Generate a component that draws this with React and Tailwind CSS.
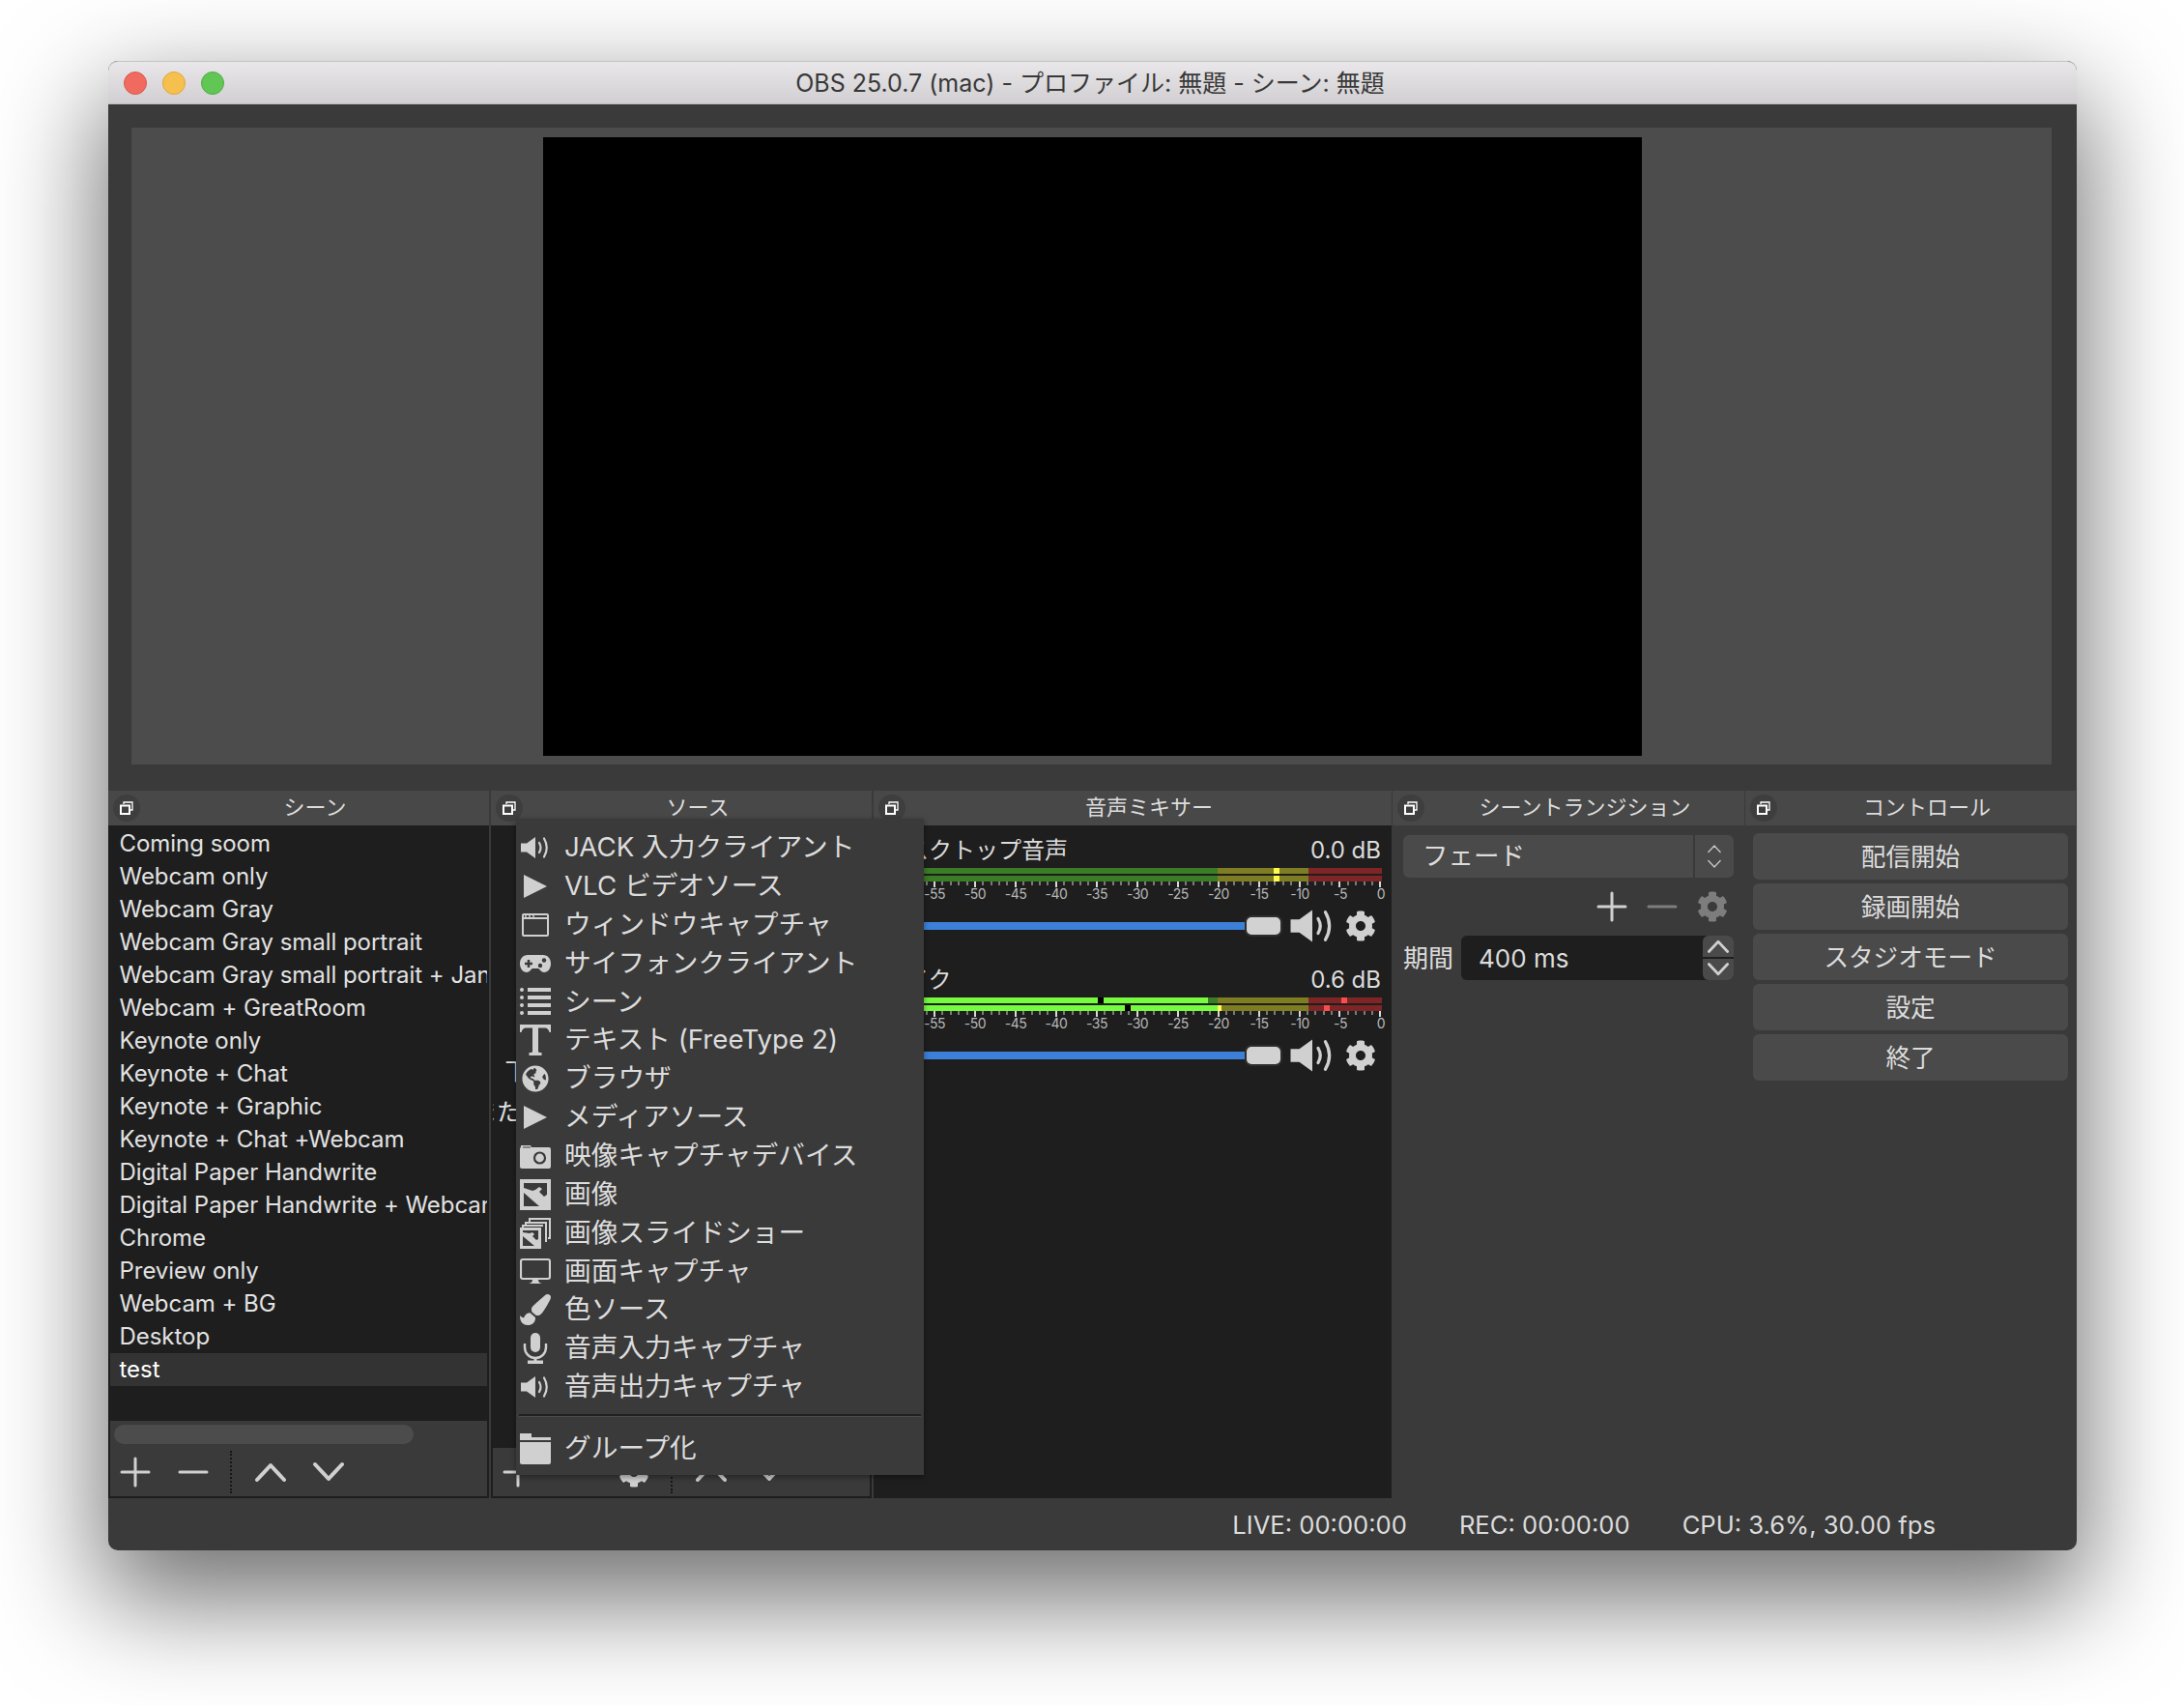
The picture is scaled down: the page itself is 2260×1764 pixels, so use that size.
import React from 'react';
import { FaCog, FaGlobeAmericas, FaPaintBrush } from 'react-icons/fa';

const scenes = [
    'Coming soom', 'Webcam only', 'Webcam Gray', 'Webcam Gray small portrait',
    'Webcam Gray small portrait + Jan', 'Webcam + GreatRoom', 'Keynote only', 'Keynote + Chat',
    'Keynote + Graphic', 'Keynote + Chat +Webcam', 'Digital Paper Handwrite',
    'Digital Paper Handwrite + Webcam', 'Chrome', 'Preview only', 'Webcam + BG', 'Desktop', 'test',
];

const buttons = ['配信開始', '録画開始', 'スタジオモード', '設定', '終了'];

const DARK = '#3a3a3a';

// menu icons, all on a 32 box
const Speaker = ({ className = 'w-[32px] h-[32px]' }) => (
    <svg viewBox="0 0 32 32" className={className}>
        <path d="M1 11.5h6L16 5v22l-9-6.500H1z" fill="currentColor" />
        <path d="M20 11q3 5 0 10M25 6.500q5.500 9.500 0 19" fill="none" stroke="currentColor" strokeWidth="2.200" strokeLinecap="round" />
    </svg>
);

const Play = () => (
    <svg viewBox="0 0 32 32" className="w-[32px] h-[32px]"><path d="M4 4l24 12-24 12z" fill="currentColor" /></svg>
);

const WindowIcon = () => (
    <svg viewBox="0 0 32 32" className="w-[32px] h-[32px]">
        <rect x="3" y="5" width="26" height="22" rx="1" fill="none" stroke="currentColor" strokeWidth="2" />
        <path d="M3 9h26" stroke="currentColor" strokeWidth="2" />
        <path d="M5 7h2M9 7h2M13 7h2" stroke="currentColor" strokeWidth="1.500" />
    </svg>
);

const Gamepad = () => (
    <svg viewBox="0 0 32 32" className="w-[32px] h-[32px]">
        <path d="M8 7h16c5 0 8 4 8 9s-3 9-7 9c-3 0-4-3-6-4h-6c-2 1-3 4-6 4-4 0-7-4-7-9s3-9 8-9z" fill="currentColor" />
        <path d="M5 16h8M9 12v8" stroke={DARK} strokeWidth="2.500" />
        <circle cx="25" cy="12.500" r="2.200" fill={DARK} />
        <circle cx="21" cy="18" r="2.200" fill={DARK} />
    </svg>
);

const ListIcon = () => (
    <svg viewBox="0 0 32 32" className="w-[32px] h-[32px]">
        {[4, 12, 20, 28].map((y) => (
            <g key={y} fill="currentColor">
                <circle cx="2" cy={y} r="2" />
                <rect x="8" y={y - 2} width="24" height="4" />
            </g>
        ))}
    </svg>
);

const TypeIcon = () => (
    <svg viewBox="0 0 32 32" className="w-[32px] h-[32px]">
        <path d="M0 0h32v8h-1.500q-1-4-4-4.500H19V28q0 1 3.500 1v3h-13v-3q3.500 0 3.500-1V3.500H5.500q-3 .5-4 4.500H0z" fill="currentColor" />
    </svg>
);

const Camera = () => (
    <svg viewBox="0 0 32 32" className="w-[32px] h-[32px]">
        <path d="M1 7V5h10l1 2h18q2 0 2 2v18q0 2-2 2H2q-2 0-2-2V9q0-2 1-2z" fill="currentColor" />
        <path d="M3 7h8" stroke={DARK} strokeWidth="1" />
        <circle cx="20.500" cy="18" r="5.500" fill="none" stroke={DARK} strokeWidth="2.200" />
    </svg>
);

const ImageIcon = () => (
    <svg viewBox="0 0 32 32" className="w-[32px] h-[32px]">
        <rect width="32" height="32" fill="currentColor" />
        <path d="M4 4h24v12l-3 2-5-5 3-3-3-2-4 3-3 1-9-3z" fill={DARK} />
        <path d="M4 14v14h16z" fill={DARK} />
    </svg>
);

const Slides = () => (
    <svg viewBox="0 0 32 32" className="w-[32px] h-[32px]">
        <path d="M10 4V1h21v20h-2M6 8V5h21v20M3 11V8h21" fill="none" stroke="currentColor" strokeWidth="2" />
        <rect x="0" y="10" width="22" height="22" fill="currentColor" />
        <path d="M3 13h16v9l-2 1-4-4 2-2-2-2-3 1-7-1z" fill={DARK} />
        <path d="M3 19v10h12z" fill={DARK} />
    </svg>
);

const Monitor = () => (
    <svg viewBox="0 0 32 32" className="w-[32px] h-[32px]">
        <rect x="1" y="4" width="30" height="20" rx="2" fill="none" stroke="currentColor" strokeWidth="2.200" />
        <path d="M9 29q4-.5 4-4h6q0 3.500 4 4z" fill="currentColor" />
    </svg>
);

const Mic = () => (
    <svg viewBox="0 0 32 32" className="w-[32px] h-[32px]">
        <rect x="11" y="0" width="10" height="20" rx="5" fill="currentColor" />
        <path d="M5 11v4a11 11 0 0 0 22 0v-4" fill="none" stroke="currentColor" strokeWidth="2.400" />
        <path d="M14.500 25h3v3.500H24V32H8v-3.500h6.500z" fill="currentColor" />
    </svg>
);

const Folder = () => (
    <svg viewBox="0 0 32 32" className="w-[32px] h-[32px]">
        <path d="M0 0h12v4h20v3H0z" fill="currentColor" />
        <path d="M0 9h32v21q0 2-2 2H2q-2 0-2-2z" fill="currentColor" />
    </svg>
);

const menuItems = [
    [<Speaker />, 'JACK 入力クライアント'],
    [<Play />, 'VLC ビデオソース'],
    [<WindowIcon />, 'ウィンドウキャプチャ'],
    [<Gamepad />, 'サイフォンクライアント'],
    [<ListIcon />, 'シーン'],
    [<TypeIcon />, 'テキスト (FreeType 2)'],
    [<FaGlobeAmericas size={28} />, 'ブラウザ'],
    [<Play />, 'メディアソース'],
    [<Camera />, '映像キャプチャデバイス'],
    [<ImageIcon />, '画像'],
    [<Slides />, '画像スライドショー'],
    [<Monitor />, '画面キャプチャ'],
    [<FaPaintBrush size={32} />, '色ソース'],
    [<Mic />, '音声入力キャプチャ'],
    [<Speaker />, '音声出力キャプチャ'],
];

const MenuRow = ({ icon, label }) => (
    <div className="h-[39.86px] flex items-center pl-[4px] text-[27.7px] text-[#dcdcdc] whitespace-nowrap">
        <span className="w-[32px] h-[32px] flex items-center justify-center text-[#d0d0d0] shrink-0">{icon}</span>
        <span className="ml-[14px]">{label}</span>
    </div>
);

const Plus = ({ className = 'text-[#d0d0d0]' }) => (
    <svg viewBox="0 0 32 32" className={`w-[32px] h-[32px] ${className}`}>
        <path d="M2 16h28M16 2v28" stroke="currentColor" strokeWidth="3" strokeLinecap="round" />
    </svg>
);

const Minus = ({ className = 'text-[#d0d0d0]' }) => (
    <svg viewBox="0 0 32 32" className={`w-[32px] h-[32px] ${className}`}>
        <path d="M2 16h28" stroke="currentColor" strokeWidth="3" strokeLinecap="round" />
    </svg>
);

const Chevron = ({ up, className = 'w-[32px] h-[32px] text-[#d0d0d0]', width = 4 }) => (
    <svg viewBox="0 0 32 32" className={className}>
        <path d={up ? 'M2 24L16 9l14 15' : 'M2 8l14 15L30 8'} fill="none" stroke="currentColor" strokeWidth={width} strokeLinecap="round" strokeLinejoin="round" />
    </svg>
);

const FloatIcon = () => (
    <span className="w-[28px] h-[28px] rounded-full bg-[#3e3e3e] flex items-center justify-center shrink-0">
        <svg viewBox="0 0 14 14" className="w-[14px] h-[14px]">
            <path d="M4 3V1h9v8h-3" fill="none" stroke="#fff" strokeWidth="1.300" />
            <rect x="1" y="4.500" width="9" height="8.500" fill="none" stroke="#fff" strokeWidth="2" />
        </svg>
    </span>
);

const DockTitle = ({ title }) => (
    <div className="h-[36px] bg-[#484848] flex items-center shrink-0 pl-[5px]">
        <FloatIcon />
        <span className="flex-1 text-center text-[22px] leading-none text-[#dcdcdc] pl-[1px] pb-[2px]">{title}</span>
    </div>
);

// sources list has a gear between minus and the divider
const Toolbar = ({ gear }) => (
    <div className="h-[50px] flex items-center bg-[#3a3a3a] pl-[10px] shrink-0">
        <Plus />
        <span className="ml-[28px]"><Minus /></span>
        {gear && <FaCog size={32} className="ml-[28px] text-[#d0d0d0]" />}
        <span className={`${gear ? 'ml-[22px]' : 'ml-[22px]'} h-[44px] border-l-2 border-dotted border-[#161616]`} />
        <span className="ml-[24px]"><Chevron up /></span>
        <span className="ml-[28px]"><Chevron /></span>
    </div>
);

const LEVELS_A = [
    [
        [336, 'bg-[#3a7d25]'], [58, 'bg-[#7f7d22]'], [6, 'bg-[#fdfc4d]'], [30, 'bg-[#7f7d22]'], [76, 'bg-[#7f2525]'],
    ],
    [
        [336, 'bg-[#3a7d25]'], [58, 'bg-[#7f7d22]'], [6, 'bg-[#fdfc4d]'], [30, 'bg-[#7f7d22]'], [76, 'bg-[#7f2525]'],
    ],
];

const LEVELS_B = [
    [
        [212, 'bg-[#76fb3f]'], [6, 'bg-black'], [108, 'bg-[#76fb3f]'], [10, 'bg-[#3a7d25]'], [94, 'bg-[#7f7d22]'],
        [34, 'bg-[#7f2525]'], [6, 'bg-[#fc4d4d]'], [36, 'bg-[#7f2525]'],
    ],
    [
        [240, 'bg-[#76fb3f]'], [6, 'bg-black'], [90, 'bg-[#76fb3f]'], [4, 'bg-[#fdfc4d]'], [90, 'bg-[#7f7d22]'],
        [16, 'bg-[#7f2525]'], [6, 'bg-[#fc4d4d]'], [54, 'bg-[#7f2525]'],
    ],
];

const dbLabels = ['-60', '-55', '-50', '-45', '-40', '-35', '-30', '-25', '-20', '-15', '-10', '-5', '0'];
const ticks = Array.from({ length: 61 }, (_, i) => i);

const Meter = ({ levels }) => (
    <div className="w-[506px]">
        <div className="flex flex-col gap-[2px]">
            {levels.map((row, r) => (
                <div key={r} className="flex h-[6px]">
                    {row.map(([w, c], i) => <div key={i} className={`h-full ${c}`} style={{ width: w }} />)}
                </div>
            ))}
        </div>
        <div className="flex justify-between items-start h-[6px]">
            {ticks.map((t) => (
                <span key={t} className={t % 5 === 0 ? 'w-[2px] h-[6px] bg-[#d8d8d8]' : 'w-[2px] h-[4px] bg-[#7a7a7a]'} />
            ))}
        </div>
        <div className="flex justify-between h-[14px] mt-[0px] px-[1px]">
            {dbLabels.map((l) => (
                <span key={l} className="w-0 flex justify-center text-[14px] leading-[14px] text-[#b8b8b8] tracking-[-0.5px]">{l}</span>
            ))}
        </div>
    </div>
);

const Channel = ({ name, db, levels }) => (
    <div className="h-[134px] pt-[8px]">
        <div className="flex justify-between items-center h-[34px] pl-[9px] pr-[11px] pb-[3px] text-[24px] leading-none text-[#dcdcdc]">
            <span>{name}</span>
            <span>{db}</span>
        </div>
        <div className="ml-[20px]"><Meter levels={levels} /></div>
        <div className="ml-[20px] flex items-center h-[32px] mt-[10px]">
            <div className="w-[364px] h-[8px] bg-[#3c80d9]" />
            <div className="w-[39px] h-[22px] bg-[#d2d2d2] rounded-[7px] border-2 border-[#2e2e2e]" />
            <Speaker className="ml-[7px] w-[48px] h-[48px] text-[#d0d0d0] shrink-0" />
            <FaCog size={32} className="ml-[10px] text-[#d0d0d0] shrink-0" />
        </div>
    </div>
);

export default function App() {
    return (
        <div className="h-[1764px] bg-white pt-[63px] pl-[112px] overflow-hidden font-['Inter','Noto_Sans_CJK_JP',sans-serif]">
            <div className="relative w-[2037px] h-[1541px] rounded-[10px] overflow-visible bg-[#3a3a3a] shadow-[0_44px_110px_8px_rgba(0,0,0,0.56)] flex flex-col">
                {/* title bar */}
                <div className="h-[45px] rounded-t-[10px] grid grid-cols-[1fr_auto_1fr] items-center bg-gradient-to-b from-[#e9e7e9] to-[#d1cfd1] border-t border-[#c4c4c4] border-b border-b-[#bdbbbd] shrink-0">
                    <div className="flex gap-[16px] pl-[16px]">
                        <span className="w-[24px] h-[24px] rounded-full bg-[#f06a60] border border-[#d9584e]" />
                        <span className="w-[24px] h-[24px] rounded-full bg-[#f6c04f] border border-[#dfa63d]" />
                        <span className="w-[24px] h-[24px] rounded-full bg-[#61c654] border border-[#4eab42]" />
                    </div>
                    <span className="text-[25px] leading-none text-[#383838] pr-[5px] pt-[2px] whitespace-nowrap">OBS 25.0.7 (mac) - プロファイル: 無題 - シーン: 無題</span>
                    <span />
                </div>

                {/* preview */}
                <div className="mt-[24px] ml-[24px] mr-[26px] pl-[2px] h-[659px] bg-[#4c4c4c] flex justify-center items-center shrink-0">
                    <div className="w-[1137px] h-[640px] bg-black" />
                </div>

                {/* docks */}
                <div className="mt-[27px] h-[732px] flex shrink-0">
                    <div className="w-[394px] flex flex-col">
                        <DockTitle title="シーン" />
                        <div className="flex-1 flex flex-col border-2 border-t-0 border-[#1e1e1e] min-h-0">
                            <div className="h-[616px] bg-[#1e1e1e] pt-[2px] overflow-hidden">
                                {scenes.map((s) => (
                                    <div key={s} className={`h-[34px] flex items-center pl-[9.5px] text-[24px] tracking-[-0.04px] leading-none whitespace-nowrap overflow-hidden ${s === 'test' ? 'bg-[#333333] text-white' : 'text-[#e2e2e2]'}`}>
                                        {s}
                                    </div>
                                ))}
                            </div>
                            <div className="flex-1 bg-[#3a3a3a] flex flex-col">
                                <div className="h-[28px] pt-[4px] pl-[4px]">
                                    <div className="w-[310px] h-[20px] rounded-full bg-[#4c4c4c]" />
                                </div>
                                <Toolbar />
                            </div>
                        </div>
                    </div>

                    <div className="ml-[2px] w-[394px] flex flex-col">
                        <DockTitle title="ソース" />
                        <div className="flex-1 flex flex-col border-2 border-t-0 border-[#1e1e1e] min-h-0">
                            <div className="flex-1 bg-[#1e1e1e] overflow-hidden pt-[234px] text-center text-[24px] leading-[42px] text-[#e2e2e2] whitespace-nowrap flex flex-col items-center">
                                <div>下の + ボタンをクリックするか、</div>
                                <div>または右クリックして追加してください</div>
                            </div>
                            <Toolbar gear />
                        </div>
                    </div>

                    <div className="ml-[2px] w-[536px] flex flex-col">
                        <DockTitle title="音声ミキサー" />
                        <div className="flex-1 bg-[#1e1e1e] pt-[2px] pl-[0px] overflow-hidden">
                            <Channel name="デスクトップ音声" db="0.0 dB" levels={LEVELS_A} />
                            <Channel name="マイク" db="0.6 dB" levels={LEVELS_B} />
                        </div>
                    </div>

                    <div className="ml-[1px] w-[364px] flex flex-col">
                        <DockTitle title="シーントランジション" />
                        <div className="flex-1 pt-[10px] pl-[11px] pr-[11px]">
                            <div className="h-[44px] flex bg-[#4a4a4a] rounded-[6px] text-[26.5px] text-[#dcdcdc]">
                                <span className="flex-1 flex items-center pl-[20px]">フェード</span>
                                <span className="w-[42px] border-l-2 border-[#3a3a3a] flex flex-col items-center justify-center gap-[2px]">
                                    <Chevron up width={3} className="w-[14px] h-[14px] text-[#c8c8c8]" />
                                    <Chevron width={3} className="w-[14px] h-[14px] text-[#c8c8c8]" />
                                </span>
                            </div>
                            <div className="mt-[14px] h-[32px] flex justify-end items-center gap-[20px] pr-[6px]">
                                <Plus />
                                <Minus className="text-[#7d7d7d]" />
                                <FaCog size={32} className="text-[#7d7d7d]" />
                            </div>
                            <div className="mt-[14px] h-[46px] flex items-center text-[26px] text-[#dcdcdc]">
                                <span className="w-[60px]">期間</span>
                                <div className="flex-1 h-full bg-[#1e1e1e] rounded-[6px] flex items-center pl-[18px] pr-[0px]">
                                    <span className="flex-1">400 ms</span>
                                    <span className="w-[32px] h-full flex flex-col gap-[2px]">
                                        <span className="flex-1 bg-[#4a4a4a] rounded-t-[6px] flex items-center justify-center">
                                            <Chevron up width={4} className="w-[22px] h-[22px] text-[#d0d0d0]" />
                                        </span>
                                        <span className="flex-1 bg-[#4a4a4a] rounded-b-[6px] flex items-center justify-center">
                                            <Chevron width={4} className="w-[22px] h-[22px] text-[#d0d0d0]" />
                                        </span>
                                    </span>
                                </div>
                            </div>
                        </div>
                    </div>

                    <div className="ml-[1px] w-[342px] flex flex-col">
                        <DockTitle title="コントロール" />
                        <div className="flex-1 pt-[8px] px-[8px] flex flex-col gap-[4px]">
                            {buttons.map((b) => (
                                <div key={b} className="h-[48px] bg-[#4a4a4a] rounded-[6px] flex items-center justify-center pt-[2px] text-[25.6px] text-[#dcdcdc]">{b}</div>
                            ))}
                        </div>
                    </div>
                </div>

                {/* status bar */}
                <div className="flex-1 flex items-center justify-end pr-[146px] pt-[3px] gap-[54px] text-[25.6px] text-[#dcdcdc] whitespace-nowrap">
                    <span>LIVE: 00:00:00</span>
                    <span>REC: 00:00:00</span>
                    <span>CPU: 3.6%, 30.00 fps</span>
                </div>

                {/* add source context menu */}
                <div className="absolute left-[422px] top-[784px] w-[422px] h-[679px] bg-[#3a3a3a] pt-[10px] shadow-[0_2px_6px_rgba(0,0,0,0.4)]">
                    {menuItems.map(([icon, label]) => <MenuRow key={label} icon={icon} label={label} />)}
                    <div className="mt-[8px] mx-[3px] h-[3px] bg-[#212121] border-b border-[#4a4a4a]" />
                    <div className="mt-[13px]"><MenuRow icon={<Folder />} label="グループ化" /></div>
                </div>
            </div>
        </div>
    );
}
